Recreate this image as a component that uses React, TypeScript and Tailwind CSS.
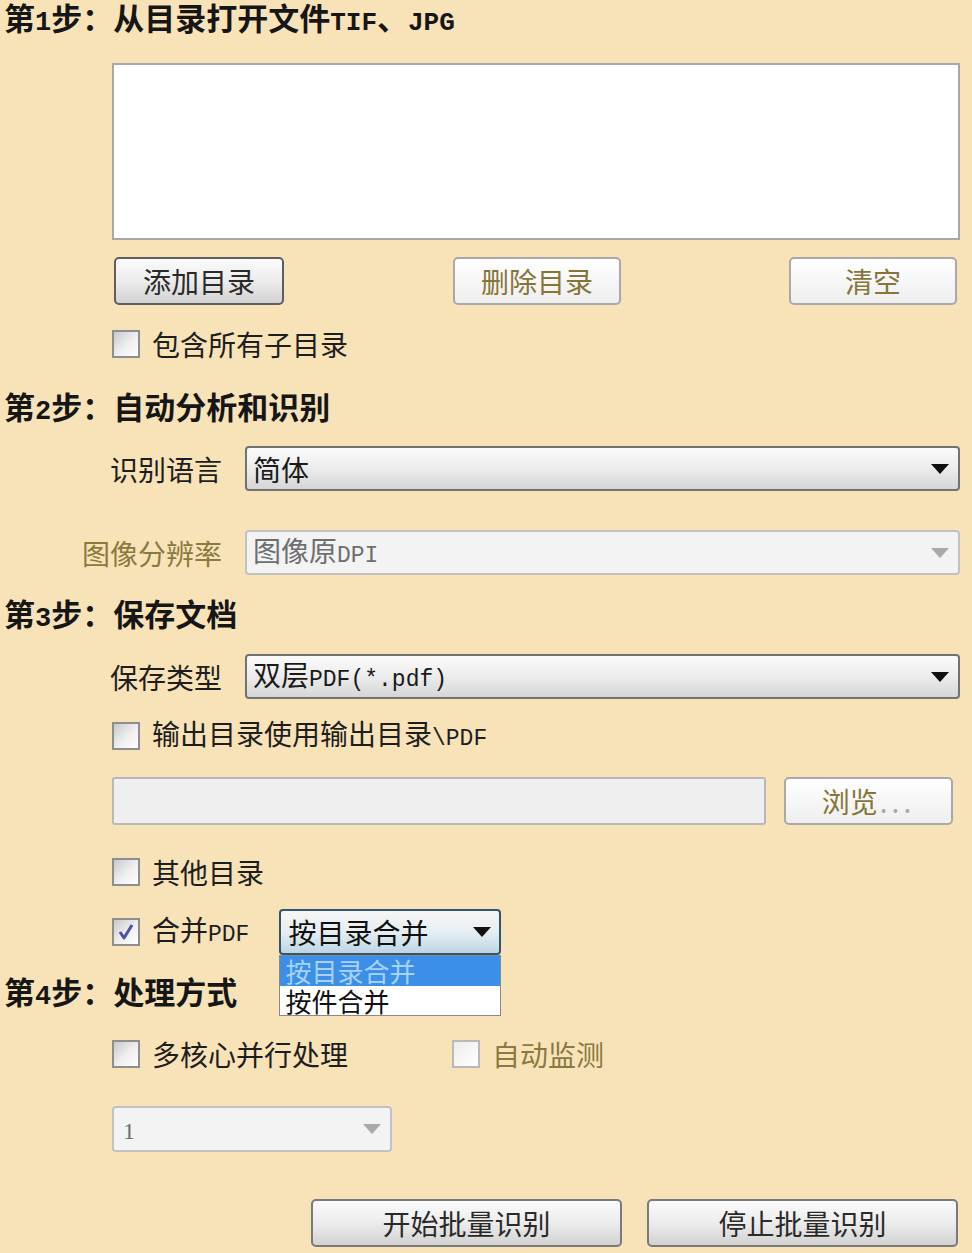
import React from "react";

const lat = "font-['Liberation_Mono','Noto_Sans_CJK_SC',monospace]";

function Tri({ disabled }: { disabled?: boolean }) {
  return (
    <svg width="18" height="10" viewBox="0 0 18 10" className="shrink-0">
      <path d="M0 0 H18 L9 10 Z" fill={disabled ? "#a9a9a9" : "#111111"} />
    </svg>
  );
}

function Box({ checked, light }: { checked?: boolean; light?: boolean }) {
  return (
    <div
      className={
        light
          ? "w-[28px] h-[28px] shrink-0 border-2 border-[#b9b9b9] bg-linear-to-br from-[#ececec] to-[#ffffff] flex items-center justify-center"
          : "w-[28px] h-[28px] shrink-0 border-2 border-[#8e8e8e] bg-linear-to-br from-[#c9c9c9] via-[#ededed] to-[#ffffff] flex items-center justify-center"
      }
    >
      {checked && (
        <svg width="18" height="18" viewBox="0 0 18 18">
          <path d="M3 9 L7 15 L15 2" stroke="#4b52a8" strokeWidth="3" fill="none" strokeLinejoin="round" />
        </svg>
      )}
    </div>
  );
}

function Heading({ n, children, h = "h-[34px]" }: { n: string; children: React.ReactNode; h?: string }) {
  return (
    <div className={`${h} flex items-center pl-[4px] text-[31px] font-bold text-[#161616] whitespace-nowrap`}>
      <span className="leading-[36px]">
        第<span className={`${lat} text-[27px] font-bold`}>{n}</span>步：{children}
      </span>
    </div>
  );
}

function Sel({
  children,
  disabled,
  className,
}: {
  children: React.ReactNode;
  disabled?: boolean;
  className: string;
}) {
  return (
    <div
      className={`${className} rounded-[4px] border-2 flex items-center justify-between pl-[6px] pr-[9px] text-[28px] ${
        disabled
          ? "border-[#c2c2c2] bg-[#f3f3f3] text-[#6e6e6e]"
          : "border-[#727272] bg-linear-to-b from-[#fbfbfb] via-[#ececec] to-[#d6d6d6] text-[#1a1a1a]"
      }`}
    >
      <span className="whitespace-nowrap leading-[34px]">{children}</span>
      <Tri disabled={disabled} />
    </div>
  );
}

function Btn({
  children,
  className,
  disabled,
  strong,
}: {
  children: React.ReactNode;
  className: string;
  disabled?: boolean;
  strong?: boolean;
}) {
  return (
    <div
      className={`${className} rounded-[5px] border-2 flex items-center justify-center text-[28px] ${
        strong ? "border-[#5e5e5e]" : disabled ? "border-[#a9a9a9]" : "border-[#7a7a7a]"
      } ${
        disabled
          ? "bg-linear-to-b from-[#ffffff] to-[#eeeeee] text-[#857638]"
          : "bg-linear-to-b from-[#fbfbfb] via-[#ececec] to-[#d2d2d2] text-[#2a2a2a]"
      }`}
    >
      <span className="leading-[34px] whitespace-nowrap">{children}</span>
    </div>
  );
}

export default function App() {
  return (
    <div className="w-[972px] h-[1253px] overflow-hidden relative bg-[#f8e3b9] text-[#1e1e1e] font-['Noto_Sans_CJK_SC',sans-serif]">
      {/* Step 1 */}
      <div className="pt-[2px]">
        <Heading n="1" h="h-[36px]">
          从目录打开文件<span className={`${lat} text-[26px] font-bold`}>TIF</span>、
          <span className={`${lat} text-[26px] font-bold`}>JPG</span>
        </Heading>
      </div>
      <div className="mt-[25px] ml-[112px] w-[848px] h-[177px] bg-white border-2 border-[#a9a9a9]" />
      <div className="mt-[17px] h-[48px] flex ml-[114px]">
        <Btn className="w-[170px] h-full" strong>
          添加目录
        </Btn>
        <Btn className="ml-[169px] w-[168px] h-full" disabled>
          删除目录
        </Btn>
        <Btn className="ml-[168px] w-[168px] h-full" disabled>
          清空
        </Btn>
      </div>
      <div className="mt-[23px] h-[32px] flex items-center ml-[112px]">
        <Box />
        <span className="ml-[12px] text-[28px] leading-[32px]">包含所有子目录</span>
      </div>

      {/* Step 2 */}
      <div className="mt-[32px]">
        <Heading n="2">自动分析和识别</Heading>
      </div>
      <div className="mt-[20px] h-[45px] flex items-center">
        <div className="w-[222px] text-right text-[28px] leading-[34px]">识别语言</div>
        <Sel className="ml-[23px] w-[715px] h-full">简体</Sel>
      </div>
      <div className="mt-[39px] h-[45px] flex items-center">
        <div className="w-[222px] text-right text-[28px] leading-[34px] text-[#8a7a3e]">图像分辨率</div>
        <Sel className="ml-[23px] w-[715px] h-full" disabled>
          图像原<span className={`${lat} text-[23px]`}>DPI</span>
        </Sel>
      </div>

      {/* Step 3 */}
      <div className="mt-[24px]">
        <Heading n="3">保存文档</Heading>
      </div>
      <div className="mt-[21px] h-[45px] flex items-center">
        <div className="w-[222px] text-right text-[28px] leading-[34px]">保存类型</div>
        <Sel className="ml-[23px] w-[715px] h-full">
          双层<span className={`${lat} text-[23px]`}>PDF(*.pdf)</span>
        </Sel>
      </div>
      <div className="mt-[21px] h-[32px] flex items-center ml-[112px]">
        <Box />
        <span className="ml-[12px] text-[28px] leading-[32px] whitespace-nowrap">
          输出目录使用输出目录<span className={`${lat} text-[23px]`}>\PDF</span>
        </span>
      </div>
      <div className="mt-[25px] h-[48px] flex ml-[112px]">
        <div className="w-[654px] h-full rounded-[3px] border-2 border-[#b8b8b8] bg-[#efefef]" />
        <Btn className="ml-[18px] w-[169px] h-full" disabled>
          浏览<span className="text-[#a8a8a8] tracking-[4px] ml-[2px]">...</span>
        </Btn>
      </div>
      <div className="mt-[31px] h-[32px] flex items-center ml-[112px]">
        <Box />
        <span className="ml-[12px] text-[28px] leading-[32px]">其他目录</span>
      </div>
      <div className="mt-[21px] h-[46px] flex items-center ml-[112px]">
        <Box checked />
        <span className="ml-[12px] text-[28px] leading-[32px] whitespace-nowrap">
          合并<span className={`${lat} text-[23px]`}>PDF</span>
        </span>
        <div className="relative ml-[30px] w-[222px] h-full z-10">
          <div className="w-full h-full rounded-[4px] border-2 border-[#34546e] bg-linear-to-b from-[#f6f6f6] via-[#e6eef2] to-[#bcd6e4] flex items-center justify-between pl-[7px] pr-[8px] text-[28px] text-[#111]">
            <span className="whitespace-nowrap leading-[34px]">按目录合并</span>
            <Tri />
          </div>
          <div className="absolute left-0 top-full w-full bg-white border border-[#8a8a8a] text-[26px]">
            <div className="h-[30px] bg-[#3b8fe6] text-[#a8d2fb] pl-[5px] flex items-center overflow-hidden">
              <span className="leading-[28px]">按目录合并</span>
            </div>
            <div className="h-[29px] text-[#111] pl-[5px] flex items-center overflow-hidden">
              <span className="leading-[28px]">按件合并</span>
            </div>
          </div>
        </div>
      </div>

      {/* Step 4 */}
      <div className="mt-[22px]">
        <Heading n="4">处理方式</Heading>
      </div>
      <div className="mt-[27px] h-[32px] flex items-center ml-[112px]">
        <div className="w-[340px] flex items-center">
          <Box />
          <span className="ml-[12px] text-[28px] leading-[32px]">多核心并行处理</span>
        </div>
        <Box light />
        <span className="ml-[12px] text-[28px] leading-[32px] text-[#8a7a3e]">自动监测</span>
      </div>
      <div className="mt-[36px] ml-[112px] h-[46px] flex">
        <Sel className="w-[280px] h-full" disabled>
          <span className="font-['Liberation_Serif',serif] text-[24px] ml-[3px]">1</span>
        </Sel>
      </div>
      <div className="mt-[47px] h-[48px] flex ml-[311px]">
        <Btn className="w-[311px] h-full">开始批量识别</Btn>
        <Btn className="ml-[25px] w-[311px] h-full">停止批量识别</Btn>
      </div>
    </div>
  );
}
